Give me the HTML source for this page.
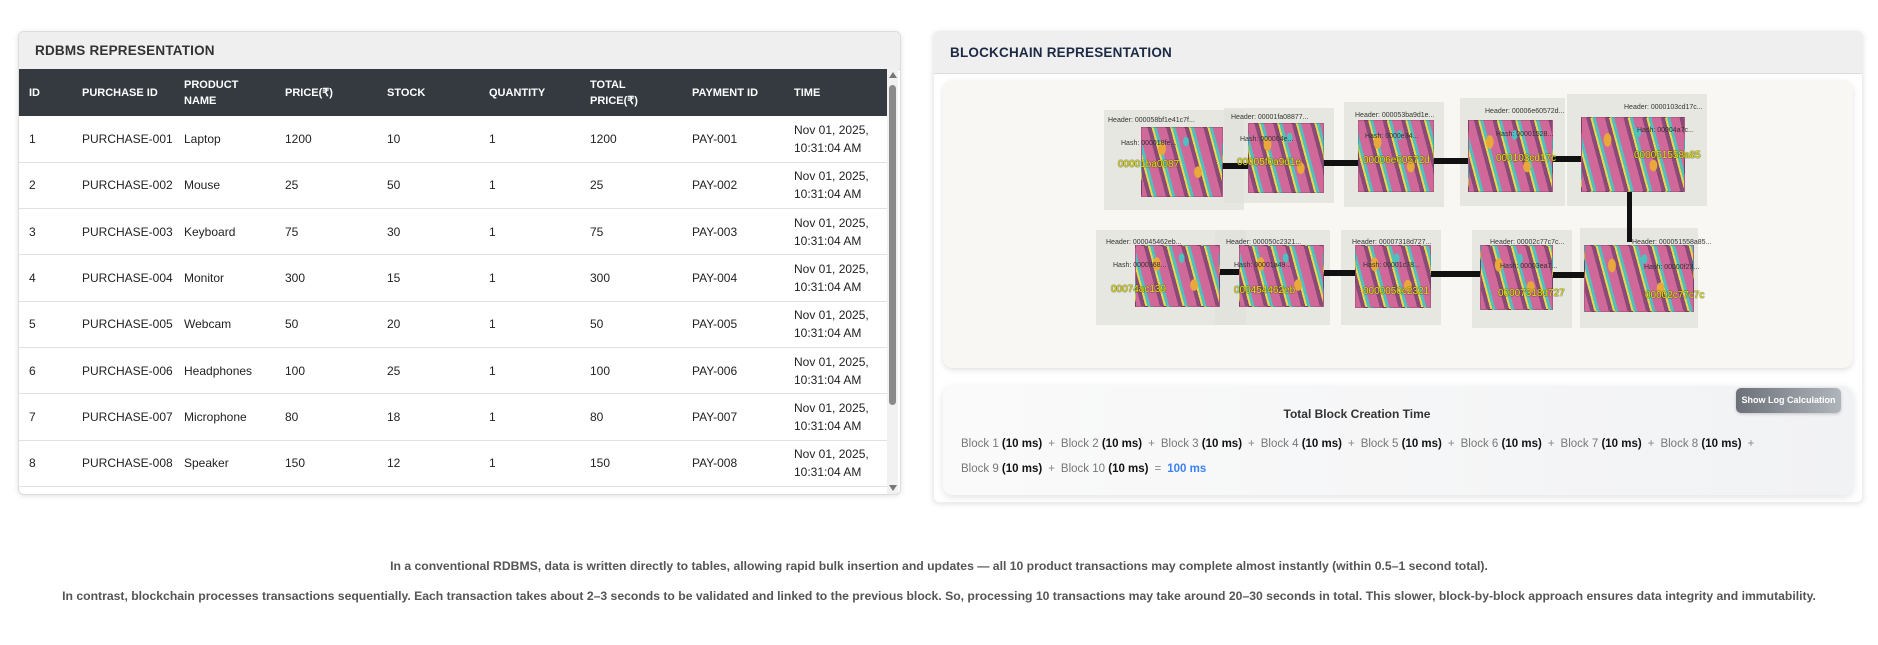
<!DOCTYPE html>
<html><head><meta charset="utf-8"><style>
*{box-sizing:border-box;margin:0;padding:0}
body{width:1878px;height:645px;background:#fff;font-family:"Liberation Sans",sans-serif;position:relative;overflow:hidden;color:#222}
.card{position:absolute;background:#fff;border:1px solid #ddd;border-radius:6px;box-shadow:0 1px 6px rgba(0,0,0,.12);overflow:hidden}
.hd{background:#efefef;border-bottom:1px solid #ddd;font-weight:bold;font-size:13.5px;letter-spacing:.2px;padding-left:16px}
table{border-collapse:collapse;font-size:12px;position:absolute;left:0;top:37px;width:870px}
th{background:#343a40;color:#fff;text-align:left;font-size:11px;height:47px;padding:0 0 0 10px;line-height:16px}
td{height:46.3px;padding:0 0 0 10px;border-bottom:1px solid #dee2e6;line-height:18px;color:#222}
.sb{position:absolute;right:2px;top:37px;width:11px;bottom:0;background:#f1f1f1}
.abs{position:absolute}
.panel{position:absolute;background:rgba(225,225,220,.75)}
.cube{position:absolute;border:1px solid rgba(0,0,0,.15);background:
radial-gradient(ellipse 8px 14px at 25% 30%,#e8a83a 45%,transparent 52%),
radial-gradient(ellipse 8px 12px at 70% 65%,#e8a83a 45%,transparent 52%),
radial-gradient(ellipse 6px 10px at 55% 20%,#4ec0c0 45%,transparent 52%),
repeating-linear-gradient(75deg,#d0689a 0 5px,#8a4a78 5px 9px,#e8d84a 9px 11px,#4ec0c0 11px 14px,#d0689a 14px 18px),
#d0689a}
.lbl{position:absolute;font-size:7px;color:#333;white-space:nowrap}
.yl{position:absolute;font-size:10px;color:#e6e600;white-space:nowrap;text-shadow:0 0 1px #333,0 0 1px #333}
.ln{position:absolute;background:#111;height:6px}
.b{color:#777}.v{color:#111;font-weight:bold}.p{color:#888;margin:0 6px}
</style></head><body>
<div class="card" style="left:18px;top:31px;width:883px;height:464px">
<div class="hd" style="height:38px;line-height:38px;color:#333">RDBMS REPRESENTATION</div>
<table>
<colgroup><col style="width:53px"><col style="width:102px"><col style="width:101px"><col style="width:102px"><col style="width:102px"><col style="width:101px"><col style="width:102px"><col style="width:102px"><col></colgroup>
<tr><th>ID</th><th>PURCHASE ID</th><th>PRODUCT<br>NAME</th><th>PRICE(₹)</th><th>STOCK</th><th>QUANTITY</th><th>TOTAL<br>PRICE(₹)</th><th>PAYMENT ID</th><th>TIME</th></tr>
<tr><td>1</td><td>PURCHASE-001</td><td>Laptop</td><td>1200</td><td>10</td><td>1</td><td>1200</td><td>PAY-001</td><td>Nov 01, 2025,<br>10:31:04 AM</td></tr>
<tr><td>2</td><td>PURCHASE-002</td><td>Mouse</td><td>25</td><td>50</td><td>1</td><td>25</td><td>PAY-002</td><td>Nov 01, 2025,<br>10:31:04 AM</td></tr>
<tr><td>3</td><td>PURCHASE-003</td><td>Keyboard</td><td>75</td><td>30</td><td>1</td><td>75</td><td>PAY-003</td><td>Nov 01, 2025,<br>10:31:04 AM</td></tr>
<tr><td>4</td><td>PURCHASE-004</td><td>Monitor</td><td>300</td><td>15</td><td>1</td><td>300</td><td>PAY-004</td><td>Nov 01, 2025,<br>10:31:04 AM</td></tr>
<tr><td>5</td><td>PURCHASE-005</td><td>Webcam</td><td>50</td><td>20</td><td>1</td><td>50</td><td>PAY-005</td><td>Nov 01, 2025,<br>10:31:04 AM</td></tr>
<tr><td>6</td><td>PURCHASE-006</td><td>Headphones</td><td>100</td><td>25</td><td>1</td><td>100</td><td>PAY-006</td><td>Nov 01, 2025,<br>10:31:04 AM</td></tr>
<tr><td>7</td><td>PURCHASE-007</td><td>Microphone</td><td>80</td><td>18</td><td>1</td><td>80</td><td>PAY-007</td><td>Nov 01, 2025,<br>10:31:04 AM</td></tr>
<tr><td>8</td><td>PURCHASE-008</td><td>Speaker</td><td>150</td><td>12</td><td>1</td><td>150</td><td>PAY-008</td><td>Nov 01, 2025,<br>10:31:04 AM</td></tr>
<tr><td>9</td><td>PURCHASE-009</td><td>Printer</td><td>200</td><td>8</td><td>1</td><td>200</td><td>PAY-009</td><td>Nov 01, 2025,<br>10:31:04 AM</td></tr>
</table>
<div class="sb"><div class="abs" style="left:2px;top:16px;width:7px;height:320px;background:#8a8a8a;border-radius:4px"></div>
<div class="abs" style="left:2px;top:3px;border:4px solid transparent;border-bottom:6px solid #777;border-top:0"></div>
<div class="abs" style="left:2px;bottom:3px;border:4px solid transparent;border-top:6px solid #777;border-bottom:0"></div></div>
</div>

<div class="card" style="left:933px;top:31px;width:930px;height:472px;border-color:#eee">
<div class="hd" style="height:42px;line-height:42px;color:#1c2a44">BLOCKCHAIN REPRESENTATION</div>
</div>
<div class="abs" style="left:943px;top:80px;width:910px;height:288px;background:#f8f7f4;border-radius:10px;box-shadow:0 2px 6px rgba(0,0,0,.12)"></div>

<div class="panel" style="left:1104px;top:110px;width:140px;height:100px"></div>
<div class="panel" style="left:1224px;top:108px;width:110px;height:95px"></div>
<div class="panel" style="left:1344px;top:102px;width:100px;height:105px"></div>
<div class="panel" style="left:1460px;top:98px;width:105px;height:108px"></div>
<div class="panel" style="left:1567px;top:94px;width:140px;height:112px"></div>
<div class="panel" style="left:1096px;top:230px;width:150px;height:95px"></div>
<div class="panel" style="left:1215px;top:230px;width:115px;height:95px"></div>
<div class="panel" style="left:1341px;top:230px;width:100px;height:95px"></div>
<div class="panel" style="left:1472px;top:230px;width:100px;height:98px"></div>
<div class="panel" style="left:1580px;top:228px;width:118px;height:100px"></div>
<div class="ln" style="left:1215px;top:163px;width:40px"></div>
<div class="ln" style="left:1324px;top:160px;width:40px"></div>
<div class="ln" style="left:1434px;top:158px;width:40px"></div>
<div class="ln" style="left:1553px;top:156px;width:35px"></div>
<div class="ln" style="left:1627px;top:187px;width:5px;height:55px"></div>
<div class="ln" style="left:1210px;top:269px;width:35px"></div>
<div class="ln" style="left:1324px;top:270px;width:35px"></div>
<div class="ln" style="left:1431px;top:271px;width:50px"></div>
<div class="ln" style="left:1553px;top:272px;width:35px"></div>
<div class="cube" style="left:1141px;top:127px;width:82px;height:70px"></div>
<div class="cube" style="left:1248px;top:123px;width:76px;height:70px"></div>
<div class="cube" style="left:1358px;top:120px;width:76px;height:72px"></div>
<div class="cube" style="left:1468px;top:120px;width:85px;height:72px"></div>
<div class="cube" style="left:1581px;top:117px;width:104px;height:75px"></div>
<div class="cube" style="left:1135px;top:245px;width:85px;height:62px"></div>
<div class="cube" style="left:1239px;top:245px;width:85px;height:62px"></div>
<div class="cube" style="left:1355px;top:245px;width:76px;height:63px"></div>
<div class="cube" style="left:1480px;top:245px;width:73px;height:65px"></div>
<div class="cube" style="left:1584px;top:245px;width:110px;height:67px"></div>
<div class="lbl" style="left:1108px;top:117px">Header: 000058bf1e41c7f...</div>
<div class="lbl" style="left:1121px;top:140px">Hash: 000018fe...</div>
<div class="yl" style="left:1118px;top:159px">00001ba0087</div>
<div class="lbl" style="left:1231px;top:114px">Header: 00001fa08877...</div>
<div class="lbl" style="left:1240px;top:136px">Hash: 000004e...</div>
<div class="yl" style="left:1237px;top:157px">00005f0a9d1e</div>
<div class="lbl" style="left:1355px;top:112px">Header: 000053ba9d1e...</div>
<div class="lbl" style="left:1365px;top:133px">Hash: 0000e34...</div>
<div class="yl" style="left:1363px;top:155px">00006e60572d</div>
<div class="lbl" style="left:1485px;top:108px">Header: 00006e60572d...</div>
<div class="lbl" style="left:1496px;top:131px">Hash: 00001528...</div>
<div class="yl" style="left:1496px;top:153px">000103cd17c</div>
<div class="lbl" style="left:1624px;top:104px">Header: 0000103cd17c...</div>
<div class="lbl" style="left:1637px;top:127px">Hash: 00004a7c...</div>
<div class="yl" style="left:1634px;top:150px">000051558a85</div>
<div class="lbl" style="left:1106px;top:239px">Header: 000045462eb...</div>
<div class="lbl" style="left:1113px;top:262px">Hash: 0000368...</div>
<div class="yl" style="left:1111px;top:284px">00074ac139</div>
<div class="lbl" style="left:1226px;top:239px">Header: 000050c2321...</div>
<div class="lbl" style="left:1234px;top:262px">Hash: 00001a49...</div>
<div class="yl" style="left:1234px;top:285px">000454462eb</div>
<div class="lbl" style="left:1352px;top:239px">Header: 00007318d727...</div>
<div class="lbl" style="left:1363px;top:262px">Hash: 00001c78...</div>
<div class="yl" style="left:1363px;top:286px">0000050c2321</div>
<div class="lbl" style="left:1490px;top:239px">Header: 00002c77c7c...</div>
<div class="lbl" style="left:1500px;top:263px">Hash: 00003ea7...</div>
<div class="yl" style="left:1498px;top:288px">00007318d727</div>
<div class="lbl" style="left:1632px;top:239px">Header: 000051558a85...</div>
<div class="lbl" style="left:1644px;top:264px">Hash: 00000f23...</div>
<div class="yl" style="left:1645px;top:290px">00002c77c7c</div>

<div class="abs" style="left:943px;top:386px;width:910px;height:109px;border-radius:10px;background:linear-gradient(90deg,#fafafa,#f1f2f4);box-shadow:0 2px 8px rgba(0,0,0,.12)"></div>
<div class="abs" style="left:1736px;top:388px;width:105px;height:25px;border-radius:5px;background:linear-gradient(90deg,#6c7078,#b0b5bc);color:#fff;font-size:9px;font-weight:bold;line-height:25px;text-align:center;box-shadow:0 1px 3px rgba(0,0,0,.2)">Show Log Calculation</div>
<div class="abs" style="left:1157px;top:407px;width:400px;text-align:center;font-size:12px;font-weight:bold;color:#333">Total Block Creation Time</div>
<div class="abs" style="left:961px;top:432px;font-size:11.5px;line-height:25px;width:880px">
<span class="b">Block 1</span> <span class="v">(10 ms)</span><span class="p">+</span><span class="b">Block 2</span> <span class="v">(10 ms)</span><span class="p">+</span><span class="b">Block 3</span> <span class="v">(10 ms)</span><span class="p">+</span><span class="b">Block 4</span> <span class="v">(10 ms)</span><span class="p">+</span><span class="b">Block 5</span> <span class="v">(10 ms)</span><span class="p">+</span><span class="b">Block 6</span> <span class="v">(10 ms)</span><span class="p">+</span><span class="b">Block 7</span> <span class="v">(10 ms)</span><span class="p">+</span><span class="b">Block 8</span> <span class="v">(10 ms)</span><span class="p">+</span><br>
<span class="b">Block 9</span> <span class="v">(10 ms)</span><span class="p">+</span><span class="b">Block 10</span> <span class="v">(10 ms)</span><span class="p">=</span><span style="color:#3b82f6;font-weight:bold">100 ms</span>
</div>

<div class="abs" style="left:0;top:559px;width:1878px;text-align:center;font-size:12.2px;font-weight:bold;color:#555">In a conventional RDBMS, data is written directly to tables, allowing rapid bulk insertion and updates — all 10 product transactions may complete almost instantly (within 0.5–1 second total).</div>
<div class="abs" style="left:0;top:589px;width:1878px;text-align:center;font-size:12.2px;font-weight:bold;color:#555">In contrast, blockchain processes transactions sequentially. Each transaction takes about 2–3 seconds to be validated and linked to the previous block. So, processing 10 transactions may take around 20–30 seconds in total. This slower, block-by-block approach ensures data integrity and immutability.</div>
</body></html>
